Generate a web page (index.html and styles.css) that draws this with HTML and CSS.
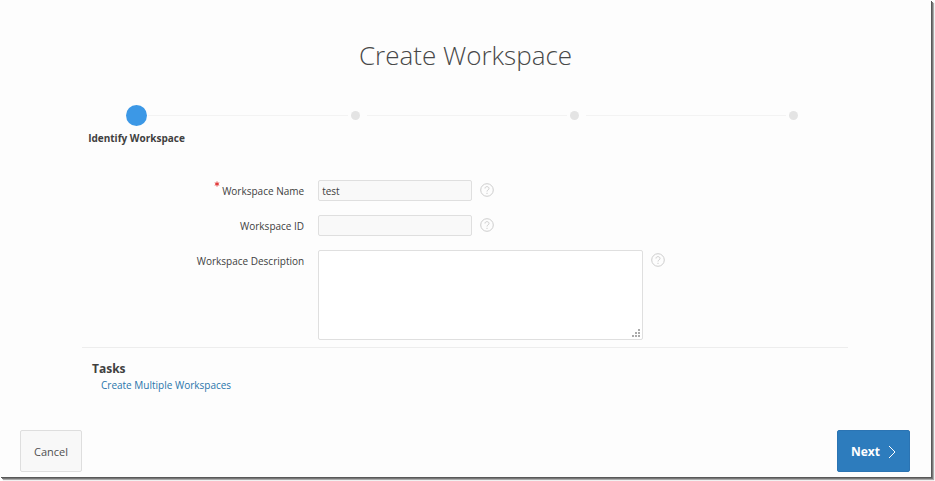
FILE: index.html
```html
<!DOCTYPE html>
<html lang="en">
<head>
<meta charset="utf-8">
<title>Create Workspace</title>
<link rel="stylesheet" href="styles.css">
</head>
<body>
<div class="window">
  <h1 class="title">Create Workspace</h1>
  <ol class="steps">
    <li class="step step-current" aria-current="step"><span class="marker"></span><span class="step-label">Identify Workspace</span></li>
    <li class="step"><span class="marker"></span></li>
    <li class="step"><span class="marker"></span></li>
    <li class="step"><span class="marker"></span></li>
  </ol>
  <form class="wizard">
    <div class="fields">
      <div class="field">
        <label class="label" for="name"><svg class="required" viewBox="0 0 6 6"><path d="M3 .5v5M.8 1.8l4.4 2.4M5.2 1.8L.8 4.2"/></svg>Workspace Name</label>
        <input class="input" id="name" type="text" value="test" required>
        <button class="help" type="button" aria-label="Help"><svg viewBox="0 0 14 14"><circle cx="7" cy="7" r="6.3"/><path d="M5 5.5c0-2.6 4-2.4 4 0C9 6.900 7 6.900 7 8.500M7 9.800v1.200"/></svg></button>
      </div>
      <div class="field">
        <label class="label" for="wid">Workspace ID</label>
        <input class="input" id="wid" type="text">
        <button class="help" type="button" aria-label="Help"><svg viewBox="0 0 14 14"><circle cx="7" cy="7" r="6.3"/><path d="M5 5.5c0-2.6 4-2.4 4 0C9 6.900 7 6.900 7 8.500M7 9.800v1.200"/></svg></button>
      </div>
      <div class="field">
        <label class="label" for="desc">Workspace Description</label>
        <div class="area-wrap">
          <textarea class="area" id="desc"></textarea>
          <svg class="grip" viewBox="0 0 8 8"><path d="M6 0h2v2H6zM6 3h2v2H6zM3 3h2v2H3zM6 6h2v2H6zM3 6h2v2H3zM0 6h2v2H0z"/></svg>
        </div>
        <button class="help" type="button" aria-label="Help"><svg viewBox="0 0 14 14"><circle cx="7" cy="7" r="6.3"/><path d="M5 5.5c0-2.6 4-2.4 4 0C9 6.900 7 6.900 7 8.500M7 9.800v1.200"/></svg></button>
      </div>
    </div>
    <section class="tasks">
      <h2 class="tasks-title">Tasks</h2>
      <a class="link" href="#">Create Multiple Workspaces</a>
    </section>
    <div class="actions">
      <button class="button" type="button">Cancel</button>
      <button class="button button-next" type="submit">Next <svg class="chevron" viewBox="0 0 8 14"><path d="M1 1l6 6-6 6"/></svg></button>
    </div>
  </form>
</div>
</body>
</html>
```
FILE: styles.css
```css
* {
  box-sizing: border-box;
}

body {
  margin: 0;
  padding: 0 4px 4px 0;
  background: #fff;
  color: #404040;
  font-family: "Open Sans", "Noto Sans", sans-serif;
  font-size: 10px;
  line-height: 14px;
}

.window {
  display: flex;
  flex-direction: column;
  min-height: calc(100vh - 4px);
  background: #fdfdfd;
  box-shadow: 1px 1px 0 #585858, 2px 2px 0 #777, 3px 3px 1px #aaa;
}

.title {
  margin: 0;
  padding-top: 36px;
  color: #484848;
  font-size: 26px;
  font-weight: 300;
  line-height: 38px;
  text-align: center;
}

.steps {
  display: grid;
  grid-template-columns: repeat(4, 1fr);
  margin: 31px 28px 0 27px;
  padding: 0;
  list-style: none;
}

.step {
  position: relative;
  display: flex;
  flex-direction: column;
  align-items: center;
  justify-content: flex-start;
  height: 44px;
}

.step:not(:last-child)::after {
  content: "";
  position: absolute;
  top: 10px;
  left: calc(50% + 11px);
  width: calc(100% - 19px);
  height: 1px;
  background: #f3f3f3;
}

.marker {
  width: 9px;
  height: 9px;
  margin: 6px 0;
  border-radius: 50%;
  background: #e4e4e4;
}

.step-current .marker {
  width: 21px;
  height: 21px;
  margin: 0 0 5px;
  background: #3c98e6;
}

.step-label {
  font-weight: 700;
}

.wizard {
  display: flex;
  flex: 1;
  flex-direction: column;
}

.fields {
  display: grid;
  gap: 13px;
  margin: 31px 83px 0 82px;
  padding-bottom: 7px;
  border-bottom: 1px solid #ededed;
}

.field {
  display: flex;
  align-items: flex-start;
}

.label {
  display: flex;
  justify-content: flex-end;
  width: 29%;
  margin-right: 14px;
  line-height: 22px;
}

.required {
  width: 6px;
  height: 6px;
  margin: 1px 2px 0 0;
  fill: none;
  stroke: #e02c2c;
}

.input,
.area {
  border: 1px solid #dfdfdf;
  border-radius: 2px;
  background: #f9f9f9;
  color: #404040;
  font: inherit;
}

.input {
  width: 154px;
  height: 21px;
  padding: 0 3px;
}

.area-wrap {
  position: relative;
  width: 325px;
}

.area {
  display: block;
  width: 100%;
  height: 90px;
  padding: 3px;
  background: #fff;
  resize: none;
}

.grip {
  position: absolute;
  right: 3px;
  bottom: 3px;
  width: 8px;
  height: 8px;
  fill: #aaa;
}

.help {
  width: 14px;
  height: 14px;
  margin: 3px 0 0 8px;
  padding: 0;
  border: 0;
  background: none;
}

.help svg {
  display: block;
  fill: none;
  stroke: #cdcdcd;
}

.tasks {
  margin: 12px 92px 0;
}

.tasks-title {
  margin: 0;
  font-size: 12px;
  line-height: 18px;
}

.link {
  display: block;
  width: fit-content;
  margin-left: 9px;
  color: #2a75ab;
  text-decoration: none;
}

.actions {
  display: flex;
  justify-content: space-between;
  margin-top: auto;
  padding: 0 21px 5px 20px;
}

.button {
  height: 42px;
  padding: 2px 13px 0;
  border: 1px solid #dedede;
  border-radius: 2px;
  background: #f8f8f8;
  color: #505050;
  font: inherit;
  font-size: 11px;
}

.button-next {
  display: flex;
  align-items: center;
  gap: 8px;
  border-color: #2b74b3;
  background: #2d7cbd;
  color: #fff;
  font-size: 12px;
  font-weight: 700;
}

.chevron {
  width: 8px;
  height: 14px;
  fill: none;
  stroke: #fff;
}
```
